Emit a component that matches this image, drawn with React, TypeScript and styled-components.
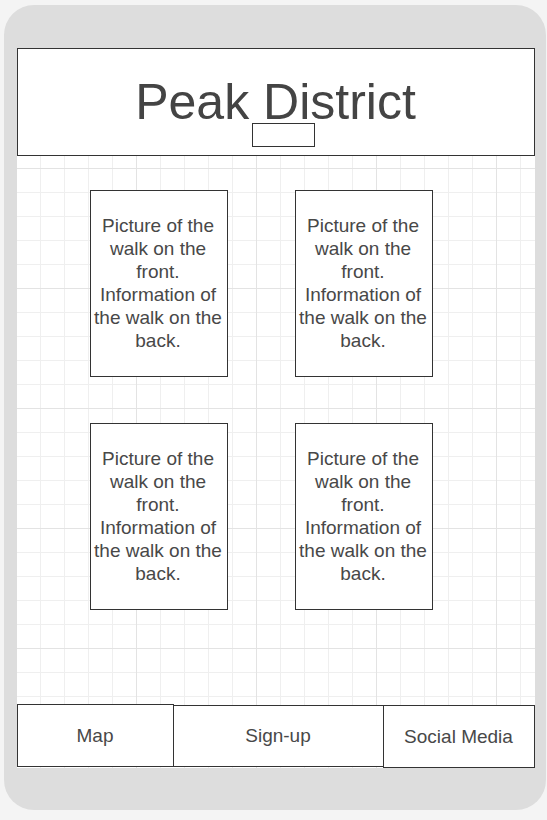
import React from "react";
import styled, { createGlobalStyle } from "styled-components";

const Global = createGlobalStyle`
  html, body { margin: 0; padding: 0; background: #f4f4f4; }
  body { font-family: "Liberation Sans", Arial, sans-serif; }
`;

const Page = styled.div`
  width: 547px;
  height: 820px;
  padding: 5px 0 0 4px;
  box-sizing: border-box;
`;

const Frame = styled.div`
  width: 542px;
  height: 805px;
  box-sizing: border-box;
  background: #dddddd;
  border-radius: 30px;
  padding: 43px 11px 42px 13px;
`;

const Screen = styled.div`
  width: 518px;
  height: 720px;
  display: flex;
  flex-direction: column;
  background-color: #ffffff;
  background-image:
    linear-gradient(to right, #e3e3e3 1px, transparent 1px),
    linear-gradient(to bottom, #e3e3e3 1px, transparent 1px),
    linear-gradient(to right, #efefef 1px, transparent 1px),
    linear-gradient(to bottom, #efefef 1px, transparent 1px);
  background-size: 120px 120px, 120px 120px, 24px 24px, 24px 24px;
  background-position: -1px 0, -1px 0, -1px 0, -1px 0;
`;

const Header = styled.header`
  position: relative;
  height: 108px;
  box-sizing: border-box;
  border: 1px solid #333333;
  background: #ffffff;
  display: flex;
  align-items: center;
  justify-content: center;
`;

const Title = styled.h1`
  margin: 0 0 0 -1px;
  font-family: "Liberation Sans", Arial, sans-serif;
  font-weight: normal;
  font-size: 50px;
  color: #444444;
`;

const SmallBox = styled.div`
  position: absolute;
  left: 234px;
  top: 74px;
  width: 63px;
  height: 24px;
  box-sizing: border-box;
  border: 1px solid #333333;
  background: #ffffff;
`;

const Cards = styled.main`
  display: grid;
  grid-template-columns: 138px 138px;
  grid-auto-rows: 187px;
  column-gap: 67px;
  row-gap: 46px;
  padding: 34px 0 0 73px;
`;

const Card = styled.div`
  box-sizing: border-box;
  border: 1px solid #333333;
  background: #ffffff;
  display: flex;
  align-items: center;
  justify-content: center;
  text-align: center;
  padding: 0 3px 2px 1px;
  font-size: 19px;
  line-height: 23px;
  color: #484848;
`;

const Footer = styled.nav`
  margin-top: auto;
  height: 64px;
  display: flex;
  align-items: flex-start;
`;

const NavButton = styled.div<{ $w: number; $h: number; $top: number; $overlap?: boolean }>`
  width: ${(p) => p.$w}px;
  height: ${(p) => p.$h}px;
  margin-top: ${(p) => p.$top}px;
  margin-left: ${(p) => (p.$overlap ? -1 : 0)}px;
  box-sizing: border-box;
  border: 1px solid #333333;
  background: #ffffff;
  display: flex;
  align-items: center;
  justify-content: center;
  padding-right: 1px;
  font-size: 19px;
  color: #484848;
`;

const cardText =
  "Picture of the walk on the front. Information of the walk on the back.";

export default function App() {
  return (
    <>
      <Global />
      <Page>
        <Frame>
          <Screen>
            <Header>
              <Title>Peak District</Title>
              <SmallBox />
            </Header>
            <Cards>
              {[0, 1, 2, 3].map((i) => (
                <Card key={i}>{cardText}</Card>
              ))}
            </Cards>
            <Footer>
              <NavButton $w={157} $h={63} $top={0}>Map</NavButton>
              <NavButton $w={211} $h={62} $top={1} $overlap>Sign-up</NavButton>
              <NavButton $w={152} $h={63} $top={1} $overlap>Social Media</NavButton>
            </Footer>
          </Screen>
        </Frame>
      </Page>
    </>
  );
}
